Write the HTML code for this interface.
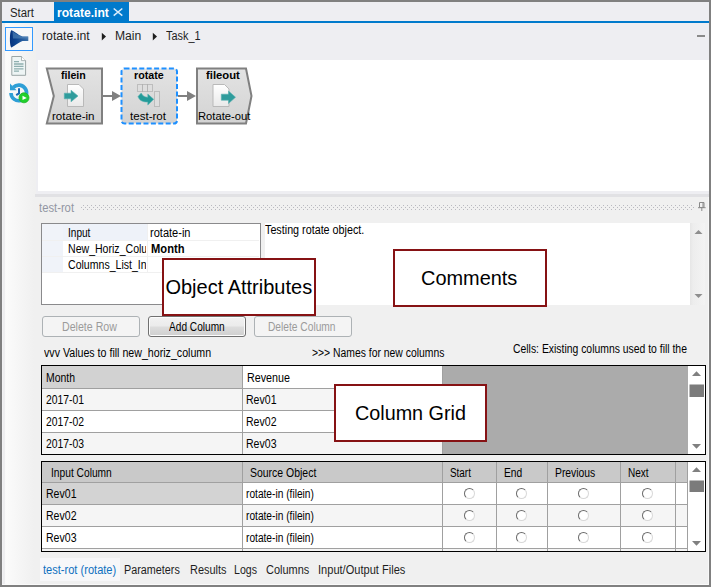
<!DOCTYPE html>
<html><head><meta charset="utf-8">
<style>
html,body{margin:0;padding:0}
body{width:711px;height:587px;overflow:hidden;background:#eeeef2;position:relative;font-family:"Liberation Sans",sans-serif;font-size:12px;color:#000}
.abs{position:absolute}
#frame{position:absolute;left:0;top:0;width:707px;height:583px;border:2px solid #808080;pointer-events:none;z-index:50}
.tx{position:absolute;white-space:nowrap;transform-origin:0 50%}
.btn{position:absolute;box-sizing:border-box;height:21px;width:98px;border:1px solid #adb2b5;border-radius:3px;background:#f4f4f4}
.btn.on{border-color:#707070;background:linear-gradient(#f2f2f2 0%,#ebebeb 48%,#dddddd 52%,#cfcfcf 100%);box-shadow:inset 0 0 0 1px #fcfcfc}
.grid{position:absolute;box-sizing:border-box;left:41px;width:665px;border:1px solid #000;background:#fff;overflow:hidden}
.c{position:absolute;box-sizing:border-box;border-right:1px solid #a0a0a0;border-bottom:1px solid #a0a0a0}
.hd{background:#d2d2d2}
.hd2{background:#c9c9c9}
.alt{background:#f5f5f5}
.radio{position:absolute;width:9px;height:9px;border-radius:50%;border:1px solid;border-color:#6a6a6a #d8d8d8 #d8d8d8 #6a6a6a;background:#fff;transform:rotate(0deg)}
.callout{position:absolute;box-sizing:border-box;border:2px solid #861214;background:#fff;z-index:20}
</style></head><body>

<div class="abs" style="left:2px;top:23px;width:34px;height:562px;background:linear-gradient(90deg,#f3f3f5 0px,#eeeef0 1.5px,#eeeef0 2.8px,#fbfbfb 3.6px,#f6f6f6 16px,#f0f0f0 32px)"></div>
<div class="abs" style="left:2px;top:21px;width:707px;height:2px;background:#007acc"></div>
<div class="abs" style="left:54px;top:2px;width:75px;height:20px;background:#007acc"></div>
<div class="tx" style="left:10.0px;top:7.04px;font-size:12px;line-height:12px;color:#1e1e1e;transform:scaleX(0.9471);">Start</div>
<div class="tx" style="left:56.7px;top:7.04px;font-size:12px;line-height:12px;color:#fff;font-weight:bold;transform:scaleX(1.0092);">rotate.int</div>
<svg class="abs" style="left:112px;top:6px" width="12" height="12"><path d="M1.7 2.5 L10.3 9.7 M10.3 2.5 L1.7 9.7" stroke="#d9ecfa" stroke-width="1.5" fill="none"/></svg>
<div class="abs" style="left:5px;top:27px;width:26px;height:22px;border:1px solid #3399ff;background:#f7f7f8"></div>
<svg class="abs" style="left:5px;top:27px" width="28" height="24" viewBox="0 0 28 24">
  <defs><linearGradient id="fg" x1="0" x2="1"><stop offset="0" stop-color="#08347e"/><stop offset="0.35" stop-color="#0e4590"/><stop offset="1" stop-color="#3d72aa"/></linearGradient></defs>
  <path d="M6.2 3.2 C4.6 5,4.4 18,6.2 20.4 C8 20.4,13 15.5,17.5 14 L23.3 14 L23.3 9.4 L17.5 9.4 C13 8,8 3.2,6.2 3.2Z" fill="url(#fg)"/>
  <path d="M7.5 4.2 C10 6,14 9,17.5 9.6 L23 9.6 L23 11.6 L8 11.6 Z" fill="#5f8fc0" opacity="0.55"/>
</svg>
<svg class="abs" style="left:10px;top:55px" width="18" height="22" viewBox="0 0 18 22">
  <path d="M1.8 1.5 L11.5 1.5 L15.6 5.6 L15.6 20.3 L1.8 20.3 Z" fill="#eef5f5" stroke="#9aa6a6" stroke-width="1"/>
  <path d="M11.5 1.5 L11.5 5.6 L15.6 5.6" fill="#fff" stroke="#9aa6a6" stroke-width="0.8"/>
  <g stroke="#7fa3a3" stroke-width="1.3" opacity="0.85"><path d="M4 6.6h5M4 9h9.5M4 11.4h9.5M4 13.8h9.5M4 16.2h5"/></g>
</svg>
<svg class="abs" style="left:7px;top:81px" width="26" height="26" viewBox="0 0 26 26">
  <path d="M4.0 11.9 A7.8 7.8 0 1 0 6.28 6.38" fill="none" stroke="#2e9fd6" stroke-width="3.6"/>
  <path d="M3 2.4 L3 9.3 L9.6 9.3 Z" fill="#2e9fd6"/>
  <path d="M12 7.2 L12 12.4 L9.2 14.2" fill="none" stroke="#1a6bb5" stroke-width="2"/>
  <circle cx="17" cy="16.8" r="5" fill="#20d02c" stroke="#1cb526" stroke-width="0.8"/>
  <path d="M15.5 14.7 L19.8 16.9 L15.5 19.1 Z" fill="#fff"/>
</svg>
<div class="tx" style="left:42.3px;top:30.04px;font-size:12px;line-height:12px;color:#1e1e1e;transform:scaleX(1.0195);">rotate.int</div>
<svg class="abs" style="left:101px;top:32px" width="6" height="9"><path d="M0.8 0.8 L5 4.6 L0.8 8.4Z" fill="#1e1e1e"/></svg>
<div class="tx" style="left:115.2px;top:30.04px;font-size:12px;line-height:12px;color:#1e1e1e;transform:scaleX(1.0112);">Main</div>
<svg class="abs" style="left:152px;top:32px" width="6" height="9"><path d="M0.8 0.8 L5 4.6 L0.8 8.4Z" fill="#1e1e1e"/></svg>
<div class="tx" style="left:166.0px;top:30.04px;font-size:12px;line-height:12px;color:#1e1e1e;transform:scaleX(0.9074);">Task_1</div>
<div class="abs" style="left:697px;top:35px;width:8px;height:2px;background:#8a8a8a"></div>
<div class="abs" style="left:38px;top:60px;width:671px;height:131px;background:#fff"></div>
<svg class="abs" style="left:38px;top:60px" width="240" height="80" viewBox="38 60 240 80">
  <defs>
    <linearGradient id="ng" x1="0" x2="0" y1="0" y2="1"><stop offset="0" stop-color="#e3e3e3"/><stop offset="1" stop-color="#d3d3d3"/></linearGradient>
    <linearGradient id="pg" x1="0" x2="0" y1="0" y2="1"><stop offset="0" stop-color="#ffffff"/><stop offset="1" stop-color="#e9e9e9"/></linearGradient>
  </defs>
  <path d="M103 96 H113" stroke="#808080" stroke-width="2"/>
  <path d="M112 91 L121 96 L112 101Z" fill="#808080"/>
  <path d="M178 96 H188" stroke="#808080" stroke-width="2"/>
  <path d="M187 91 L196 96 L187 101Z" fill="#808080"/>
  <path d="M46.8 68.5 H102 V123.5 H46.8 L53.8 96Z" fill="url(#ng)" stroke="#808080" stroke-width="2"/>
  <path d="M67.5 84.5 H79 L83.5 89 V106.5 H67.5Z" fill="url(#pg)" stroke="#b9b9b9" stroke-width="1"/>
  <path d="M64.3 93.2 H71 V90.2 L78 96 L71 101.8 V98.8 H64.3Z" fill="#2f9c9c" stroke="#58b0b0" stroke-width="0.6"/>
  <rect x="121.5" y="68.5" width="55.5" height="55" rx="3" fill="url(#ng)" stroke="#1e90ff" stroke-width="2" stroke-dasharray="5 2.4"/>
  <g fill="#dedede" stroke="#9c9c9c" stroke-width="1" stroke-dasharray="1 1">
    <rect x="137.5" y="84.5" width="5" height="7"/><rect x="142.5" y="84.5" width="5" height="7"/><rect x="147.5" y="84.5" width="5" height="7"/>
    <rect x="154.5" y="91.5" width="5" height="15"/>
  </g>
  <path d="M138 96.5 L141.2 93 C142.5 96,145 97.2,147.8 97.2 L147.8 94 L153.7 99.3 L147.8 105 L147.8 102 C143 102.2,139.2 100.5,138 96.5 Z" fill="#239b99" stroke="#5ab3b1" stroke-width="0.6"/>
  <path d="M197 68.5 H246 L251.5 96 L246 123.5 H197Z" fill="url(#ng)" stroke="#808080" stroke-width="2"/>
  <path d="M213 84.5 H224.5 L229 89 V106.5 H213Z" fill="url(#pg)" stroke="#b9b9b9" stroke-width="1"/>
  <path d="M221.3 94.2 H228.5 V91 L235.5 97.2 L228.5 103.5 V100.2 H221.3Z" fill="#2f9c9c" stroke="#58b0b0" stroke-width="0.6"/>
</svg>
<div class="tx" style="left:61.2px;top:69.59px;font-size:11px;line-height:11px;color:#000;font-weight:bold;transform:scaleX(0.9663);">filein</div>
<div class="tx" style="left:52.2px;top:110.67px;font-size:11.5px;line-height:11.5px;color:#000;transform:scaleX(1.0075);">rotate-in</div>
<div class="tx" style="left:133.6px;top:69.59px;font-size:11px;line-height:11px;color:#000;font-weight:bold;transform:scaleX(0.9719);">rotate</div>
<div class="tx" style="left:130.0px;top:110.67px;font-size:11.5px;line-height:11.5px;color:#000;transform:scaleX(1.0061);">test-rot</div>
<div class="tx" style="left:206.2px;top:69.59px;font-size:11px;line-height:11px;color:#000;font-weight:bold;transform:scaleX(1.0245);">fileout</div>
<div class="tx" style="left:197.5px;top:110.67px;font-size:11.5px;line-height:11.5px;color:#000;transform:scaleX(0.9740);">Rotate-out</div>
<div class="abs" style="left:35px;top:194px;width:674px;height:3px;background:#e1e1e4"></div>
<div class="abs" style="left:35px;top:197px;width:674px;height:388px;background:#f0f0f0"></div>
<div class="tx" style="left:39.0px;top:202.24px;font-size:12px;line-height:12px;color:#9296a3;transform:scaleX(0.9374);">test-rot</div>
<svg class="abs" style="left:81px;top:205px" width="614" height="5">
  <defs><pattern id="dots" width="4" height="4" patternUnits="userSpaceOnUse"><rect x="2" y="0" width="1" height="1" fill="#b9b9c0"/><rect x="0" y="2" width="1" height="1" fill="#b9b9c0"/></pattern></defs>
  <rect x="0" y="0" width="613" height="5" fill="url(#dots)"/>
</svg>
<svg class="abs" style="left:697px;top:201px" width="10" height="11"><path d="M2.5 1.5 H7 V6.5 H2.5Z M6 1.5 V6.5 M1 6.7 H8.6 M4.8 7 V10" fill="none" stroke="#8a8a8a" stroke-width="1"/></svg>
<div class="abs" style="left:41px;top:223px;width:218px;height:80px;border:1px solid #8a8a8c;background:#fff"></div>
<div class="abs" style="left:42px;top:224px;width:21px;height:48px;background:#f0f3f9"></div>
<div class="abs" style="left:63px;top:224px;width:84px;height:16px;background:#eef2f9"></div>
<div class="abs" style="left:42px;top:240px;width:217px;height:1px;background:#f0f0f0"></div>
<div class="abs" style="left:42px;top:256px;width:217px;height:1px;background:#f0f0f0"></div>
<div class="abs" style="left:42px;top:272px;width:217px;height:1px;background:#f0f0f0"></div>
<div class="abs" style="left:147px;top:224px;width:1px;height:48px;background:#f0f0f0"></div>
<div class="tx" style="left:67.6px;top:226.54px;font-size:12px;line-height:12px;color:#000;transform:scaleX(0.8394);">Input</div>
<div class="abs" style="left:0;top:0;width:146px;height:587px;overflow:hidden"><div class="tx" style="left:67.6px;top:242.54px;font-size:12px;line-height:12px;color:#000;transform:scaleX(0.88);">New_Horiz_Column</div></div>
<div class="abs" style="left:0;top:0;width:146px;height:587px;overflow:hidden"><div class="tx" style="left:67.6px;top:258.54px;font-size:12px;line-height:12px;color:#000;transform:scaleX(0.88);">Columns_List_Input</div></div>
<div class="tx" style="left:150.0px;top:226.54px;font-size:12px;line-height:12px;color:#000;transform:scaleX(0.9201);">rotate-in</div>
<div class="tx" style="left:151.0px;top:242.54px;font-size:12px;line-height:12px;color:#000;font-weight:bold;transform:scaleX(0.9311);">Month</div>
<div class="abs" style="left:265px;top:223px;width:425px;height:82px;background:#fff"></div>
<div class="abs" style="left:690px;top:223px;width:15px;height:82px;background:linear-gradient(90deg,#e6e6e6,#ededed 20%,#f3f3f3)"></div>
<svg class="abs" style="left:690px;top:223px" width="16" height="82"><path d="M4.5 11 L8.5 7 L12.5 11Z M4.5 71 L8.5 75 L12.5 71Z" fill="#8e8e8e"/></svg>
<div class="tx" style="left:265.2px;top:224.04px;font-size:12px;line-height:12px;color:#000;transform:scaleX(0.8968);">Testing rotate object.</div>
<div class="btn" style="left:42px;top:316px"></div>
<div class="btn on" style="left:148px;top:316px"></div>
<div class="btn" style="left:254px;top:316px"></div>
<div class="tx" style="left:62.4px;top:320.64px;font-size:12px;line-height:12px;color:#9b9b9b;transform:scaleX(0.8851);">Delete Row</div>
<div class="tx" style="left:168.5px;top:320.64px;font-size:12px;line-height:12px;color:#000;transform:scaleX(0.8435);">Add Column</div>
<div class="tx" style="left:268.4px;top:320.64px;font-size:12px;line-height:12px;color:#9b9b9b;transform:scaleX(0.8505);">Delete Column</div>
<div class="tx" style="left:44.2px;top:346.74px;font-size:12px;line-height:12px;color:#000;transform:scaleX(0.8864);">vvv Values to fill new_horiz_column</div>
<div class="tx" style="left:312.4px;top:346.74px;font-size:12px;line-height:12px;color:#000;transform:scaleX(0.8650);">&gt;&gt;&gt; Names for new columns</div>
<div class="tx" style="left:512.5px;top:342.74px;font-size:12px;line-height:12px;color:#000;transform:scaleX(0.8663);">Cells: Existing columns used to fill the</div>
<div class="grid" style="top:365px;height:90px">
<div class="abs" style="left:401px;top:0;width:245px;height:88px;background:#ababab"></div>
<div class="c hd" style="left:0;top:0px;width:201px;height:23px"></div>
<div class="c " style="left:201px;top:0px;width:200px;height:23px"></div>
<div class="c alt" style="left:0;top:23px;width:201px;height:22px"></div>
<div class="c alt" style="left:201px;top:23px;width:200px;height:22px"></div>
<div class="c " style="left:0;top:45px;width:201px;height:22px"></div>
<div class="c " style="left:201px;top:45px;width:200px;height:22px"></div>
<div class="c alt" style="left:0;top:67px;width:201px;height:22px"></div>
<div class="c alt" style="left:201px;top:67px;width:200px;height:22px"></div>
<svg class="abs" style="left:646px;top:0" width="17" height="88"><rect width="17" height="88" fill="#fff"/><path d="M4 10 L8.5 5.2 L13 10Z M4 78 L8.5 82.8 L13 78Z" fill="#808080"/><rect x="1.5" y="18.5" width="14.5" height="12.5" fill="#7b7b7b"/></svg>
</div>
<div class="tx" style="left:45.9px;top:372.14px;font-size:12px;line-height:12px;color:#000;transform:scaleX(0.8696);">Month</div>
<div class="tx" style="left:246.8px;top:372.14px;font-size:12px;line-height:12px;color:#000;transform:scaleX(0.8952);">Revenue</div>
<div class="tx" style="left:46.3px;top:393.54px;font-size:12px;line-height:12px;color:#000;transform:scaleX(0.8630);">2017-01</div>
<div class="tx" style="left:246.3px;top:393.54px;font-size:12px;line-height:12px;color:#000;transform:scaleX(0.8793);">Rev01</div>
<div class="tx" style="left:46.3px;top:415.54px;font-size:12px;line-height:12px;color:#000;transform:scaleX(0.8630);">2017-02</div>
<div class="tx" style="left:246.3px;top:415.54px;font-size:12px;line-height:12px;color:#000;transform:scaleX(0.8793);">Rev02</div>
<div class="tx" style="left:46.3px;top:437.54px;font-size:12px;line-height:12px;color:#000;transform:scaleX(0.8630);">2017-03</div>
<div class="tx" style="left:246.3px;top:437.54px;font-size:12px;line-height:12px;color:#000;transform:scaleX(0.8793);">Rev03</div>
<div class="grid" style="top:461px;height:91px">
<div class="c hd2" style="left:0px;top:0px;width:201px;height:21px;"></div>
<div class="c hd2" style="left:201px;top:0px;width:200px;height:21px;"></div>
<div class="c hd2" style="left:401px;top:0px;width:54px;height:21px;"></div>
<div class="c hd2" style="left:455px;top:0px;width:51px;height:21px;"></div>
<div class="c hd2" style="left:506px;top:0px;width:73px;height:21px;"></div>
<div class="c hd2" style="left:579px;top:0px;width:55px;height:21px;"></div>
<div class="c hd2" style="left:634px;top:0px;width:12px;height:21px;"></div>
<div class="c hd" style="left:0px;top:21px;width:201px;height:22px;background:#d3d3d3;"></div>
<div class="c " style="left:201px;top:21px;width:200px;height:22px;"></div>
<div class="c " style="left:401px;top:21px;width:54px;height:22px;"></div>
<div class="c " style="left:455px;top:21px;width:51px;height:22px;"></div>
<div class="c " style="left:506px;top:21px;width:73px;height:22px;"></div>
<div class="c " style="left:579px;top:21px;width:55px;height:22px;"></div>
<div class="c " style="left:634px;top:21px;width:12px;height:22px;"></div>
<div class="c alt" style="left:0px;top:43px;width:201px;height:22px;"></div>
<div class="c alt" style="left:201px;top:43px;width:200px;height:22px;"></div>
<div class="c alt" style="left:401px;top:43px;width:54px;height:22px;"></div>
<div class="c alt" style="left:455px;top:43px;width:51px;height:22px;"></div>
<div class="c alt" style="left:506px;top:43px;width:73px;height:22px;"></div>
<div class="c alt" style="left:579px;top:43px;width:55px;height:22px;"></div>
<div class="c alt" style="left:634px;top:43px;width:12px;height:22px;"></div>
<div class="c " style="left:0px;top:65px;width:201px;height:22px;"></div>
<div class="c " style="left:201px;top:65px;width:200px;height:22px;"></div>
<div class="c " style="left:401px;top:65px;width:54px;height:22px;"></div>
<div class="c " style="left:455px;top:65px;width:51px;height:22px;"></div>
<div class="c " style="left:506px;top:65px;width:73px;height:22px;"></div>
<div class="c " style="left:579px;top:65px;width:55px;height:22px;"></div>
<div class="c " style="left:634px;top:65px;width:12px;height:22px;"></div>
<div class="c alt" style="left:0px;top:87px;width:201px;height:22px;"></div>
<div class="c alt" style="left:201px;top:87px;width:200px;height:22px;"></div>
<div class="c alt" style="left:401px;top:87px;width:54px;height:22px;"></div>
<div class="c alt" style="left:455px;top:87px;width:51px;height:22px;"></div>
<div class="c alt" style="left:506px;top:87px;width:73px;height:22px;"></div>
<div class="c alt" style="left:579px;top:87px;width:55px;height:22px;"></div>
<div class="c alt" style="left:634px;top:87px;width:12px;height:22px;"></div>
<div class="radio" style="left:422px;top:26px"></div>
<div class="radio" style="left:474px;top:26px"></div>
<div class="radio" style="left:536px;top:26px"></div>
<div class="radio" style="left:600px;top:26px"></div>
<div class="radio" style="left:422px;top:48px"></div>
<div class="radio" style="left:474px;top:48px"></div>
<div class="radio" style="left:536px;top:48px"></div>
<div class="radio" style="left:600px;top:48px"></div>
<div class="radio" style="left:422px;top:70px"></div>
<div class="radio" style="left:474px;top:70px"></div>
<div class="radio" style="left:536px;top:70px"></div>
<div class="radio" style="left:600px;top:70px"></div>
<svg class="abs" style="left:646px;top:0" width="17" height="89"><rect width="17" height="89" fill="#fff"/><path d="M4 10 L8.5 5.2 L13 10Z M4 79 L8.5 83.8 L13 79Z" fill="#808080"/><rect x="1.5" y="18.5" width="14.5" height="11.5" fill="#7b7b7b"/></svg>
</div>
<div class="tx" style="left:50.8px;top:467.44px;font-size:12px;line-height:12px;color:#000;transform:scaleX(0.8519);">Input Column</div>
<div class="tx" style="left:250.3px;top:467.44px;font-size:12px;line-height:12px;color:#000;transform:scaleX(0.8720);">Source Object</div>
<div class="tx" style="left:449.8px;top:467.44px;font-size:12px;line-height:12px;color:#000;transform:scaleX(0.8248);">Start</div>
<div class="tx" style="left:504.3px;top:467.44px;font-size:12px;line-height:12px;color:#000;transform:scaleX(0.8524);">End</div>
<div class="tx" style="left:554.9px;top:467.44px;font-size:12px;line-height:12px;color:#000;transform:scaleX(0.8632);">Previous</div>
<div class="tx" style="left:628.4px;top:467.44px;font-size:12px;line-height:12px;color:#000;transform:scaleX(0.8349);">Next</div>
<div class="tx" style="left:46.3px;top:487.54px;font-size:12px;line-height:12px;color:#000;transform:scaleX(0.8793);">Rev01</div>
<div class="tx" style="left:245.7px;top:487.54px;font-size:12px;line-height:12px;color:#000;transform:scaleX(0.8485);">rotate-in (filein)</div>
<div class="tx" style="left:46.3px;top:509.54px;font-size:12px;line-height:12px;color:#000;transform:scaleX(0.8793);">Rev02</div>
<div class="tx" style="left:245.7px;top:509.54px;font-size:12px;line-height:12px;color:#000;transform:scaleX(0.8485);">rotate-in (filein)</div>
<div class="tx" style="left:46.3px;top:531.54px;font-size:12px;line-height:12px;color:#000;transform:scaleX(0.8793);">Rev03</div>
<div class="tx" style="left:245.7px;top:531.54px;font-size:12px;line-height:12px;color:#000;transform:scaleX(0.8485);">rotate-in (filein)</div>
<div class="callout" style="left:162px;top:258px;width:154px;height:58px"></div>
<div class="callout" style="left:392.5px;top:249px;width:154px;height:58px"></div>
<div class="callout" style="left:334px;top:384px;width:153px;height:58px"></div>
<div class="tx" style="left:165.4px;top:277.37px;font-size:20px;line-height:20px;color:#000;z-index:21;">Object Attributes</div>
<div class="tx" style="left:421.0px;top:267.87px;font-size:20px;line-height:20px;color:#000;transform:scaleX(0.9960);z-index:21;">Comments</div>
<div class="tx" style="left:354.8px;top:402.87px;font-size:20px;line-height:20px;color:#000;transform:scaleX(0.9880);z-index:21;">Column Grid</div>
<div class="abs" style="left:40px;top:558px;width:80px;height:23px;background:#f7f7f9"></div>
<div class="tx" style="left:43.2px;top:564.44px;font-size:12px;line-height:12px;color:#0e70c0;transform:scaleX(0.9225);">test-rot (rotate)</div>
<div class="tx" style="left:124.2px;top:564.44px;font-size:12px;line-height:12px;color:#1e1e1e;transform:scaleX(0.8997);">Parameters</div>
<div class="tx" style="left:189.5px;top:564.44px;font-size:12px;line-height:12px;color:#1e1e1e;transform:scaleX(0.9122);">Results</div>
<div class="tx" style="left:234.2px;top:564.44px;font-size:12px;line-height:12px;color:#1e1e1e;transform:scaleX(0.8840);">Logs</div>
<div class="tx" style="left:266.3px;top:564.44px;font-size:12px;line-height:12px;color:#1e1e1e;transform:scaleX(0.9145);">Columns</div>
<div class="tx" style="left:318.0px;top:564.44px;font-size:12px;line-height:12px;color:#1e1e1e;transform:scaleX(0.9218);">Input/Output Files</div>
<div class="abs" style="left:2px;top:584px;width:707px;height:1px;background:#fafafa"></div><div class="abs" style="left:708px;top:197px;width:1px;height:388px;background:#f8f8f8"></div>
<div id="frame"></div>
</body></html>
